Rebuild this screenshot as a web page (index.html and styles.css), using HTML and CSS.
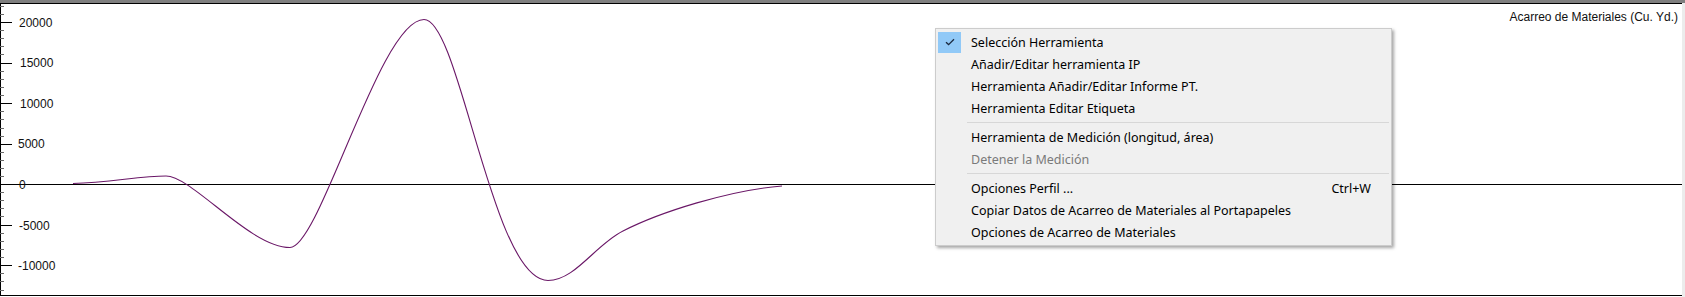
FILE: index.html
```html
<!DOCTYPE html>
<html>
<head>
<meta charset="utf-8">
<link rel="stylesheet" href="styles.css">
</head>
<body>
<div class="window">
  <div class="topbar"></div>
  <div class="body">
    <div class="plot">
      <svg class="chart" width="1682" height="294" viewBox="0 3 1682 294">
        <g class="frame">
          <line x1="0" y1="3.5" x2="1682" y2="3.5"/>
          <line x1="0.5" y1="3" x2="0.5" y2="296"/>
          <line x1="0" y1="295.5" x2="1682" y2="295.5"/>
          <line x1="0" y1="184.5" x2="1682" y2="184.5"/>
        </g>
        <g class="minor">
          <line x1="0" y1="6.5" x2="4" y2="6.5"/>
          <line x1="0" y1="14.5" x2="4" y2="14.5"/>
          <line x1="0" y1="30.5" x2="4" y2="30.5"/>
          <line x1="0" y1="38.5" x2="4" y2="38.5"/>
          <line x1="0" y1="46.5" x2="4" y2="46.5"/>
          <line x1="0" y1="54.5" x2="4" y2="54.5"/>
          <line x1="0" y1="71.5" x2="4" y2="71.5"/>
          <line x1="0" y1="79.5" x2="4" y2="79.5"/>
          <line x1="0" y1="87.5" x2="4" y2="87.5"/>
          <line x1="0" y1="95.5" x2="4" y2="95.5"/>
          <line x1="0" y1="111.5" x2="4" y2="111.5"/>
          <line x1="0" y1="119.5" x2="4" y2="119.5"/>
          <line x1="0" y1="128.5" x2="4" y2="128.5"/>
          <line x1="0" y1="136.5" x2="4" y2="136.5"/>
          <line x1="0" y1="152.5" x2="4" y2="152.5"/>
          <line x1="0" y1="160.5" x2="4" y2="160.5"/>
          <line x1="0" y1="168.5" x2="4" y2="168.5"/>
          <line x1="0" y1="176.5" x2="4" y2="176.5"/>
          <line x1="0" y1="192.5" x2="4" y2="192.5"/>
          <line x1="0" y1="200.5" x2="4" y2="200.5"/>
          <line x1="0" y1="208.5" x2="4" y2="208.5"/>
          <line x1="0" y1="216.5" x2="4" y2="216.5"/>
          <line x1="0" y1="233.5" x2="4" y2="233.5"/>
          <line x1="0" y1="241.5" x2="4" y2="241.5"/>
          <line x1="0" y1="249.5" x2="4" y2="249.5"/>
          <line x1="0" y1="257.5" x2="4" y2="257.5"/>
          <line x1="0" y1="273.5" x2="4" y2="273.5"/>
          <line x1="0" y1="281.5" x2="4" y2="281.5"/>
          <line x1="0" y1="290.5" x2="4" y2="290.5"/>
        </g>
        <g class="major">
          <line x1="0" y1="22.5" x2="12" y2="22.5"/>
          <line x1="0" y1="63.5" x2="12" y2="63.5"/>
          <line x1="0" y1="103.5" x2="12" y2="103.5"/>
          <line x1="0" y1="144.5" x2="12" y2="144.5"/>
          <line x1="0" y1="225.5" x2="12" y2="225.5"/>
          <line x1="0" y1="265.5" x2="12" y2="265.5"/>
        </g>
        <g class="labels">
          <text x="19" y="26.5">20000</text>
          <text x="20" y="67">15000</text>
          <text x="20" y="107.5">10000</text>
          <text x="18" y="148">5000</text>
          <text x="19" y="188.5">0</text>
          <text x="19" y="229.5">-5000</text>
          <text x="18" y="270">-10000</text>
          <text class="title" x="1678" y="20.5">Acarreo de Materiales (Cu. Yd.)</text>
        </g>
        <path class="curve" d="M73,183.5 C110,182.5 140,176 166,176 C192,176 250,247.5 290,247.5 C320,247.5 380,19.5 424,19.5 C460,19.5 492,280.5 548,280.5 C575,280.5 595,245 623,231 C660,212 730,190 782,186"/>
      </svg>
    </div>
    <div class="edge"></div>
  </div>

  <div class="menu">
    <div class="item checked">
      <span class="icon"><svg width="10" height="8" viewBox="0 0 10 8"><path d="M1 4.2 L3.6 6.6 L9 1.2" fill="none" stroke="#1b2a40" stroke-width="1.3"/></svg></span>
      <span class="label">Selección Herramienta</span>
    </div>
    <div class="item"><span class="icon"></span><span class="label">Añadir/Editar herramienta IP</span></div>
    <div class="item"><span class="icon"></span><span class="label">Herramienta Añadir/Editar Informe PT.</span></div>
    <div class="item"><span class="icon"></span><span class="label">Herramienta Editar Etiqueta</span></div>
    <div class="sep"></div>
    <div class="item"><span class="icon"></span><span class="label">Herramienta de Medición (longitud, área)</span></div>
    <div class="item disabled"><span class="icon"></span><span class="label">Detener la Medición</span></div>
    <div class="sep"></div>
    <div class="item"><span class="icon"></span><span class="label">Opciones Perfil ...</span><span class="shortcut">Ctrl+W</span></div>
    <div class="item"><span class="icon"></span><span class="label">Copiar Datos de Acarreo de Materiales al Portapapeles</span></div>
    <div class="item"><span class="icon"></span><span class="label">Opciones de Acarreo de Materiales</span></div>
  </div>
</div>
</body>
</html>
```

FILE: styles.css
```css
html, body {
  margin: 0;
  padding: 0;
  background: #ffffff;
}

.window {
  position: relative;
  width: 1685px;
  height: 297px;
  display: flex;
  flex-direction: column;
  overflow: hidden;
  background: #ffffff;
}

.topbar {
  height: 3px;
  background: #7f7f7f;
  flex: none;
}

.body {
  flex: 1;
  display: flex;
}

.plot {
  width: 1682px;
  flex: none;
}

.chart {
  display: block;
}

.frame line {
  stroke: #000;
  stroke-width: 1;
  shape-rendering: crispEdges;
}

.minor line {
  stroke: #6a6a6a;
  stroke-width: 1;
  shape-rendering: crispEdges;
}

.major line {
  stroke: #000;
  stroke-width: 1;
  shape-rendering: crispEdges;
}

.labels text {
  font-family: "Liberation Sans", Arial, sans-serif;
  font-size: 12px;
  fill: #111;
}

.labels .title {
  text-anchor: end;
}

.curve {
  fill: none;
  stroke: #6a1767;
  stroke-width: 1.1;
}

.edge {
  flex: 1;
  background: #ececec;
}

.menu {
  position: absolute;
  left: 935px;
  top: 28px;
  width: 455px;
  padding: 2px 0 2px 0;
  background: #f0f0f0;
  border: 1px solid #cccccc;
  box-shadow: 2px 2px 3px rgba(0, 0, 0, 0.35);
  font-family: "Noto Sans", "Open Sans", sans-serif;
  font-size: 12.5px;
  color: #000;
}

.item {
  height: 22px;
  display: flex;
  align-items: center;
  padding-right: 20px;
}

.icon {
  width: 23px;
  height: 21px;
  margin-left: 2px;
  display: flex;
  align-items: center;
  justify-content: center;
  flex: none;
}

.checked .icon {
  background: #91c9f7;
}

.label {
  margin-left: 10px;
  flex: 1;
  white-space: nowrap;
}

.shortcut {
  white-space: nowrap;
}

.disabled {
  color: #7a7a7a;
}

.sep {
  height: 1px;
  background: #d7d7d7;
  margin: 3px 2px 3px 31px;
}
```
